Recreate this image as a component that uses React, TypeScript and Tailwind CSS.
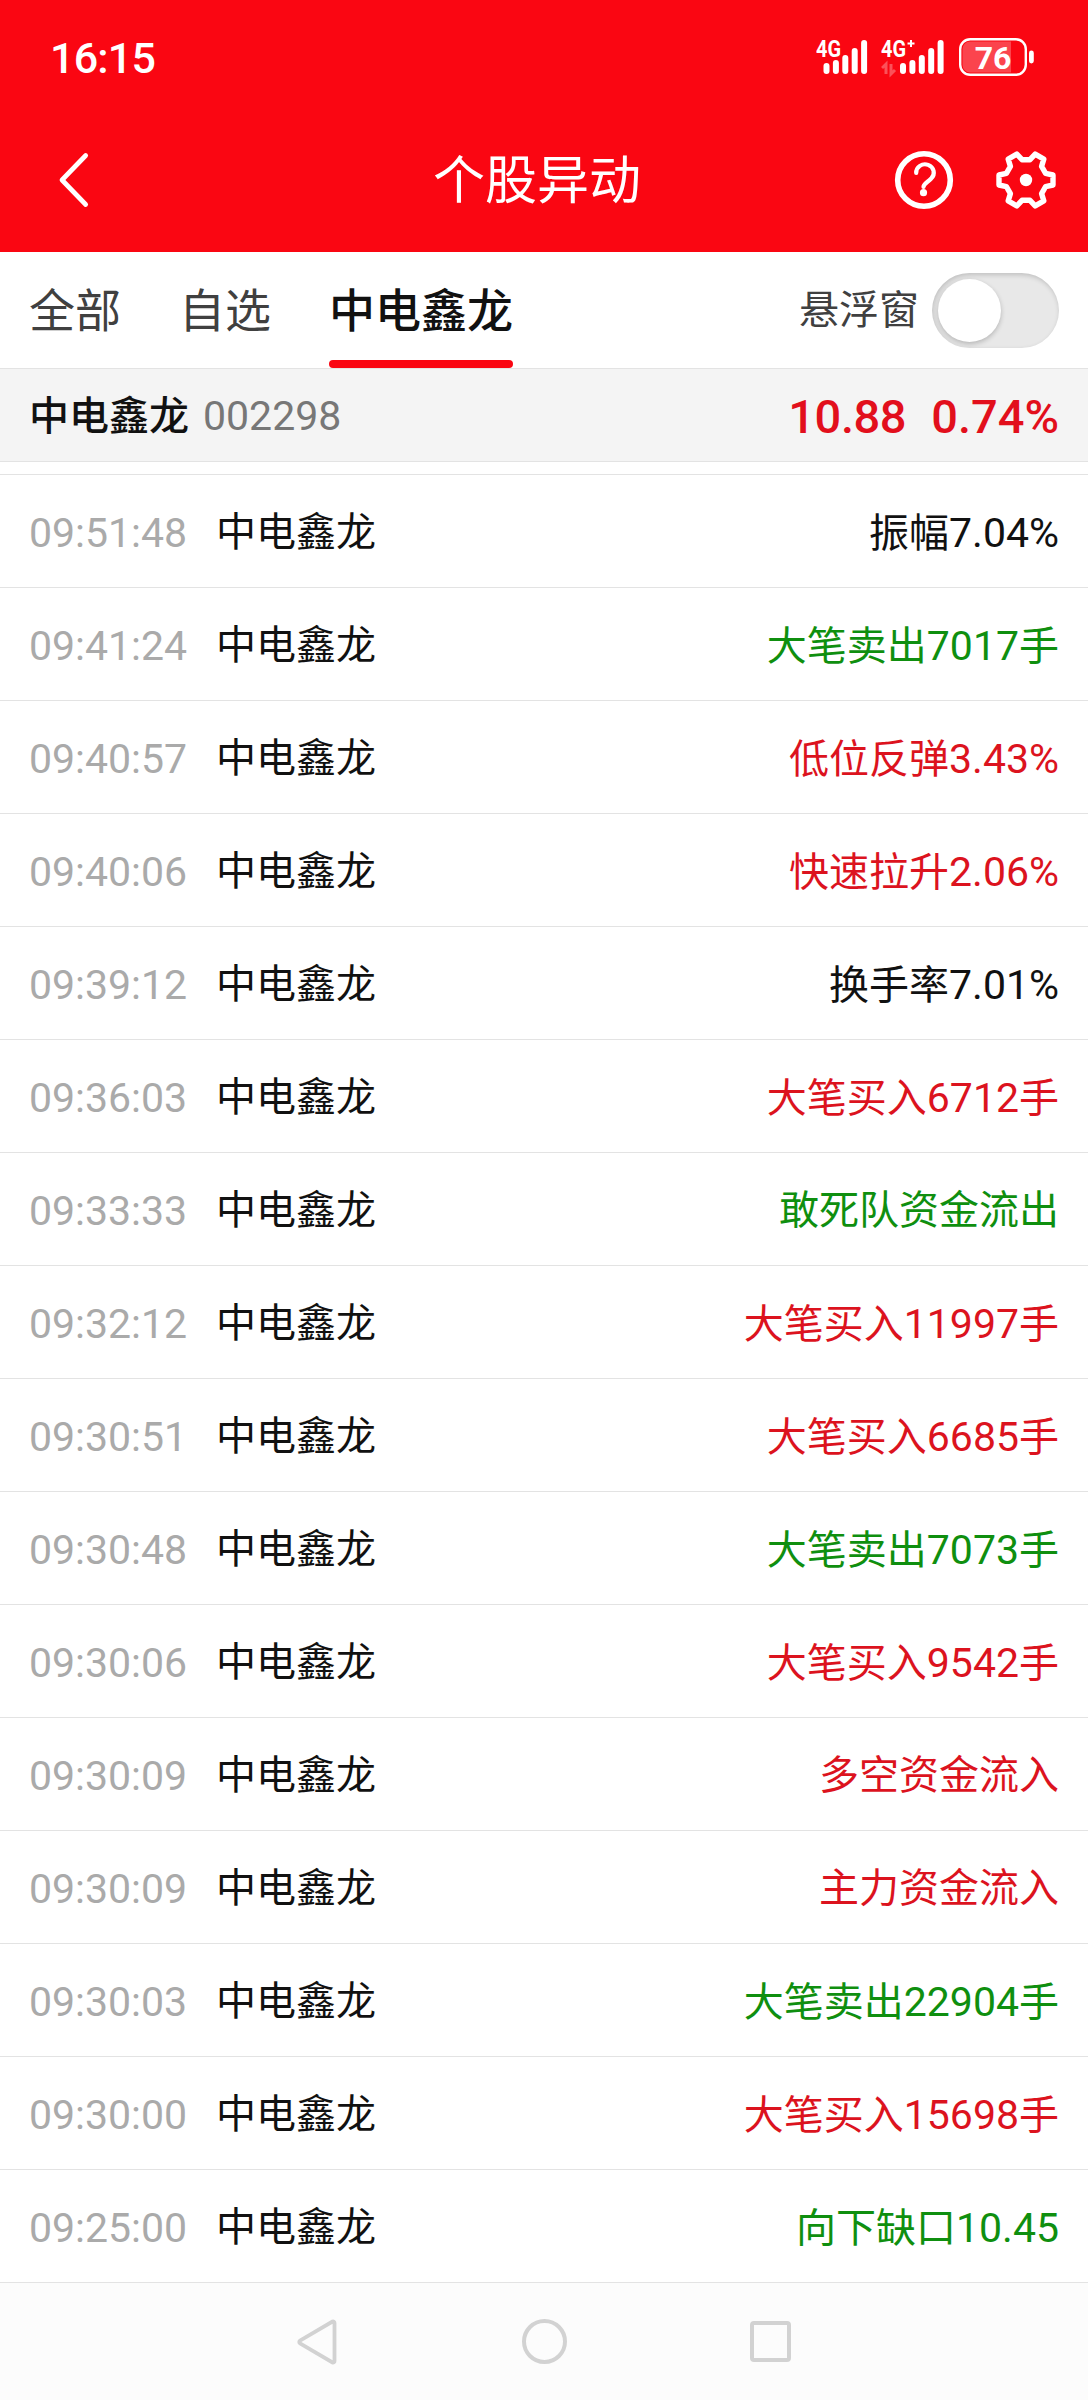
import React from "react";
import clsx from "clsx";

type Tone = "up" | "down" | "flat";

interface Move {
  time: string;
  label: string;
  value?: string;
  unit?: string;
  tone: Tone;
}

const STOCK = { name: "中电鑫龙", code: "002298", price: "10.88", change: "0.74%" };

const MOVES: Move[] = [
  { time: "09:51:48", label: "振幅", value: "7.04%", tone: "flat" },
  { time: "09:41:24", label: "大笔卖出", value: "7017", unit: "手", tone: "down" },
  { time: "09:40:57", label: "低位反弹", value: "3.43%", tone: "up" },
  { time: "09:40:06", label: "快速拉升", value: "2.06%", tone: "up" },
  { time: "09:39:12", label: "换手率", value: "7.01%", tone: "flat" },
  { time: "09:36:03", label: "大笔买入", value: "6712", unit: "手", tone: "up" },
  { time: "09:33:33", label: "敢死队资金流出", tone: "down" },
  { time: "09:32:12", label: "大笔买入", value: "11997", unit: "手", tone: "up" },
  { time: "09:30:51", label: "大笔买入", value: "6685", unit: "手", tone: "up" },
  { time: "09:30:48", label: "大笔卖出", value: "7073", unit: "手", tone: "down" },
  { time: "09:30:06", label: "大笔买入", value: "9542", unit: "手", tone: "up" },
  { time: "09:30:09", label: "多空资金流入", tone: "up" },
  { time: "09:30:09", label: "主力资金流入", tone: "up" },
  { time: "09:30:03", label: "大笔卖出", value: "22904", unit: "手", tone: "down" },
  { time: "09:30:00", label: "大笔买入", value: "15698", unit: "手", tone: "up" },
  { time: "09:25:00", label: "向下缺口", value: "10.45", tone: "down" },
];

const BARS = [11, 14, 19, 26, 34];

const Signal: React.FC<{ plus?: boolean }> = ({ plus }) => {
  const start = plus ? 19 : 7.5;
  const width = plus ? 64 : 52;
  return (
    <svg width={width} height="54" viewBox={`0 -8 ${width} 54`} fill="#fff">
      <text
        x="0"
        y="19"
        fontSize="23"
        fontWeight="700"
        textLength="25"
        lengthAdjust="spacingAndGlyphs"
      >
        4G
      </text>
      {plus && (
        <>
          <path d="M30 2v7M26.500 5.500h7" stroke="#fff" strokeWidth="2" />
          <path
            d="M5 36V26L1 30M10 26v10l4-4"
            fill="none"
            stroke="#fff"
            strokeOpacity="0.3"
            strokeWidth="3"
          />
        </>
      )}
      {BARS.map((h, i) => (
        <rect key={h} x={start + i * 9.4} y={36 - h} width="6" height={h} rx="3" />
      ))}
    </svg>
  );
};

const Battery: React.FC = () => (
  <svg width="76" height="38" fill="#fff">
    <rect x="1.200" y="1.200" width="65.600" height="35.600" rx="10" fill="none" stroke="#fff" strokeWidth="2.400" />
    <path d="M52 3.500H11a7.500 7.500 0 0 0-7.500 7.500v16a7.500 7.500 0 0 0 7.500 7.500h41z" fillOpacity="0.25" />
    <rect x="70" y="12.500" width="4.800" height="13" rx="2.400" />
    <text x="34" y="30.500" fontSize="32" fontWeight="700" textAnchor="middle">
      76
    </text>
  </svg>
);

const StatusBar: React.FC = () => (
  <div className="flex h-28 items-center justify-between pl-[50px] pr-[53px] pt-0.5">
    <span className="pt-0.5 text-[43px] leading-none font-medium tracking-[-0.8px]">16:15</span>
    <div className="flex items-center">
      <Signal />
      <div className="w-[13px]" />
      <Signal plus />
      <div className="w-[14px]" />
      <Battery />
    </div>
  </div>
);

const TitleBar: React.FC = () => (
  <div className="grid h-[140px] grid-cols-[1fr_auto_1fr] items-center pb-1">
    <svg className="ml-[56px]" width="36" height="60" fill="none" stroke="#fff" strokeWidth="4.700">
      <path d="M29.700 5.500 6 30l23.700 24.500" strokeLinecap="round" strokeLinejoin="round" />
    </svg>
    <h1 className="-ml-[14px] pt-1 text-[52px] leading-none">个股异动</h1>
    <div className="mr-[31px] flex justify-end gap-[41px]">
      <svg width="60" height="60" viewBox="-30 -30 60 60" fill="none" stroke="#fff">
        <circle r="26.300" strokeWidth="5.600" />
        <path
          d="M-7.800-7a8.800 8.300 0 1 1 15 5.500C3.500 2.500-.500 3.500-.500 7"
          strokeWidth="4.200"
          strokeLinecap="round"
        />
        <circle cx="-.500" cy="12.700" r="3.600" fill="#fff" stroke="none" />
      </svg>
      <svg width="62" height="60" viewBox="-31 -30 62 60" fill="none" stroke="#fff">
        <path
          d="M-4-20.300H4L9.200-25.900 17.800-20.900 15.600-13.600 19.600-6.700 27-5V5L19.600 6.700 15.600 13.600 17.800 20.900 9.200 25.900 4 20.300H-4L-9.200 25.900-17.800 20.900-15.600 13.600-19.600 6.700-27 5V-5L-19.600-6.700-15.600-13.600-17.800-20.900-9.200-25.900Z"
          strokeWidth="5.400"
          strokeLinejoin="round"
        />
        <circle r="6.200" fill="#fff" stroke="none" />
      </svg>
    </div>
  </div>
);

const Tabs: React.FC = () => (
  <div className="flex h-[117px] items-center justify-between border-b border-[#e3e3e3] pr-[29px] pl-[29px] text-[#404040]">
    <nav className="flex h-full gap-[58px] text-[46px] leading-[118px]">
      <span>全部</span>
      <span>自选</span>
      <span className="relative font-medium text-[#111]">
        {STOCK.name}
        <i className="absolute inset-x-0 bottom-0 h-2 rounded-full bg-[#fa0612]" />
      </span>
    </nav>
    <div className="flex items-center">
      <span className="mr-[13px] pt-0.5 text-[40px] leading-none">悬浮窗</span>
      <div className="flex h-[75px] w-[127px] items-center rounded-full bg-[#e8e8e8] pl-1.5 shadow-[inset_1px_2px_5px_rgba(0,0,0,0.18)]">
        <div className="size-[63px] rounded-full bg-white shadow-[0_2px_5px_rgba(0,0,0,0.22)]" />
      </div>
    </div>
  </div>
);

const Summary: React.FC = () => (
  <div className="flex h-[93px] items-center justify-between border-b border-[#e3e3e3] bg-[#f4f4f4] px-[29px] pt-[3px]">
    <div className="flex items-center">
      <span className="text-[40px] leading-none font-medium text-[#111]">{STOCK.name}</span>
      <span className="ml-[14px] text-[41px] leading-none text-[#777]">{STOCK.code}</span>
    </div>
    <div className="flex gap-[25px] text-[47px] leading-none font-medium text-[#e20f1c]">
      <span className="tracking-[-0.4px]">{STOCK.price}</span>
      <span>{STOCK.change}</span>
    </div>
  </div>
);

const MoveRow: React.FC<{ move: Move }> = ({ move }) => (
  <li className="flex h-[113px] items-center border-b border-[#e3e3e3] px-[29px] pt-1 text-[40px] leading-[56px]">
    <span className="w-[187px] text-[41px] text-[#aaa]">{move.time}</span>
    <span className="text-[#111]">{STOCK.name}</span>
    <span
      className={clsx("ml-auto", {
        "text-[#dc131e]": move.tone === "up",
        "text-[#0f8f0f]": move.tone === "down",
        "text-[#111]": move.tone === "flat",
      })}
    >
      {move.label}
      {move.value && <span className="text-[41px]">{move.value}</span>}
      {move.unit}
    </span>
  </li>
);

const SystemNav: React.FC = () => (
  <div className="flex h-[117px] items-center justify-center bg-[#fcfcfc] pr-px">
    <svg width="40" height="46" fill="none" stroke="#d2d2d2" strokeWidth="3.800">
      <path d="M35.500 2.500a1.500 1.500 0 0 1 2 1.500v38a1.500 1.500 0 0 1-2 1.500L3 24.300a1.500 1.500 0 0 1 0-2.600z" />
    </svg>
    <div className="mr-[183px] ml-[185px] size-[45px] rounded-full border-4 border-[#d2d2d2]" />
    <div className="size-[41px] rounded-[4px] border-4 border-[#d2d2d2]" />
  </div>
);

const App: React.FC = () => {
  return (
    <div className="h-[2400px] w-[1088px] overflow-hidden bg-white font-[Roboto,'Noto_Sans_CJK_SC',sans-serif]">
      <header className="h-[252px] bg-[#fa0612] text-white">
        <StatusBar />
        <TitleBar />
      </header>
      <Tabs />
      <Summary />
      <ul className="mt-3 border-t border-[#e3e3e3]">
        {MOVES.map((move, i) => (
          <MoveRow key={i} move={move} />
        ))}
      </ul>
      <SystemNav />
    </div>
  );
};

export default App;
